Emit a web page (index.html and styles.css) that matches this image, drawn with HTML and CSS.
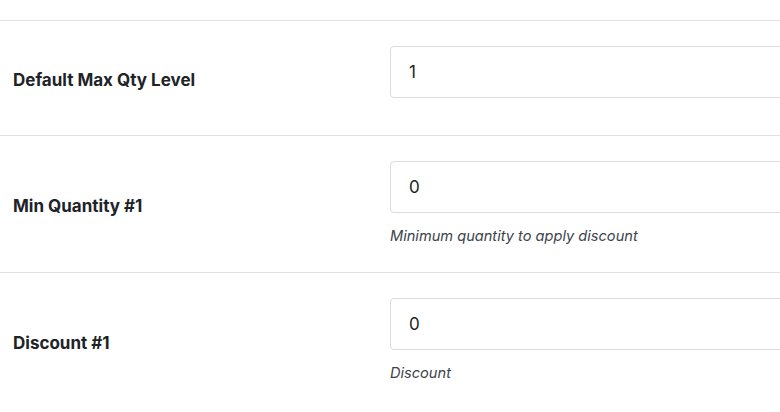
FILE: index.html
```html
<!DOCTYPE html>
<html lang="en">
<head>
<meta charset="utf-8">
<title>Settings</title>
<link rel="stylesheet" href="styles.css">
</head>
<body>
<div class="form">
  <div class="spacer"></div>
  <div class="row">
    <div class="label">Default Max Qty Level</div>
    <div class="field">
      <div class="input">1</div>
    </div>
  </div>
  <div class="row">
    <div class="label">Min Quantity #1</div>
    <div class="field">
      <div class="input">0</div>
      <div class="help">Minimum quantity to apply discount</div>
    </div>
  </div>
  <div class="row">
    <div class="label">Discount #1</div>
    <div class="field">
      <div class="input">0</div>
      <div class="help">Discount</div>
    </div>
  </div>
</div>
</body>
</html>
```
FILE: styles.css
```css
html, body {
  margin: 0;
  padding: 0;
  background: #fff;
  overflow: hidden;
}
body {
  font-family: Inter, "Liberation Sans", sans-serif;
  color: #1d2327;
  width: 780px;
  height: 412px;
}
.spacer {
  height: 20px;
}
.row {
  display: flex;
  align-items: center;
  border-top: 1px solid #e2e2e2;
  padding: 25px 0;
}
.label {
  width: 377px;
  padding-left: 13px;
  padding-top: 3px;
  font-size: 17px;
  font-weight: 700;
  flex: none;
}
.field {
  flex: none;
  width: 420px;
  padding-bottom: 12px;
}
.input {
  height: 50px;
  border: 1px solid #dcdcdc;
  border-radius: 4px;
  padding: 0 18px;
  font-size: 17px;
  line-height: 50px;
  color: #1d2327;
}
.help {
  margin-top: 12px;
  font-size: 14.6px;
  font-style: italic;
  line-height: 22px;
  color: #3c434a;
}
.field:has(.help) {
  padding-bottom: 0;
}
```
